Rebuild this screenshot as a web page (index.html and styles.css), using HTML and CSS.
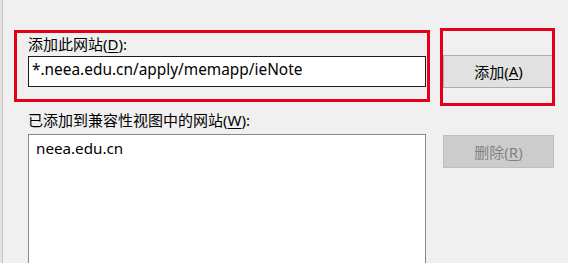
FILE: index.html
```html
<!DOCTYPE html>
<html lang="zh-CN">
<head>
<meta charset="utf-8">
<title>兼容性视图设置</title>
<link rel="stylesheet" href="styles.css">
</head>
<body>
<div class="edge"></div>
<div class="dialog">
  <div class="label label-add">添加此网站(<u>D</u>):</div>
  <div class="row row-add">
    <div class="field">*.neea.edu.cn/apply/memapp/ieNote</div>
    <div class="btn">添加(<u>A</u>)</div>
  </div>
  <div class="label label-list">已添加到兼容性视图中的网站(<u>W</u>):</div>
  <div class="row row-list">
    <div class="list"><div class="item">neea.edu.cn</div></div>
    <div class="btn btn-disabled">删除(<u>R</u>)</div>
  </div>
  <div class="mark mark-input"></div>
  <div class="mark mark-button"></div>
</div>
</body>
</html>
```
FILE: styles.css
```css
html, body {
  margin: 0;
  padding: 0;
  background: #f0f0f0;
  width: 568px;
  height: 263px;
  overflow: hidden;
}
body {
  position: relative;
  font-family: "Noto Sans", "Noto Sans CJK SC", sans-serif;
  font-size: 15px;
  color: #000;
}
.edge {
  position: absolute;
  left: 0;
  top: 0;
  width: 2px;
  height: 263px;
  background: #e2e2e2;
  border-right: 1px solid #c8c8c8;
}
.dialog {
  display: flex;
  flex-direction: column;
  padding-left: 28px;
}
.label {
  height: 21px;
  line-height: 21px;
  white-space: nowrap;
  font-size: 15px;
}
.label-add {
  margin-top: 34px;
}
.label-list {
  margin-top: 22px;
  height: 24px;
}
u {
  text-decoration-thickness: 1px;
  text-underline-offset: 2px;
}
.row {
  display: flex;
  gap: 17px;
  align-items: flex-start;
}
.field {
  box-sizing: border-box;
  width: 398px;
  height: 31px;
  margin-top: 1px;
  border: 1px solid #1c1c1c;
  background: #fff;
  padding-left: 3px;
  font-size: 15.4px;
  line-height: 25px;
  white-space: nowrap;
}
.btn {
  box-sizing: border-box;
  width: 111px;
  height: 33px;
  padding-bottom: 1px;
  background: #e1e1e1;
  border: 1px solid #adadad;
  display: flex;
  align-items: center;
  justify-content: center;
  font-size: 15px;
}
.btn-disabled {
  margin-top: 1px;
  padding-bottom: 0;
  background: #cccccc;
  border-color: #bfbfbf;
  color: #838383;
}
.list {
  box-sizing: border-box;
  width: 398px;
  height: 129px;
  border: 1px solid #828790;
  border-bottom: 0;
  background: #fff;
  padding: 2px 0 0 7px;
  font-size: 15.2px;
}
.item {
  line-height: 22px;
}
.mark {
  position: absolute;
  box-sizing: border-box;
  border: 3px solid #e50019;
}
.mark-input {
  left: 14px;
  top: 30px;
  width: 416px;
  height: 72px;
}
.mark-button {
  left: 440px;
  top: 28px;
  width: 115px;
  height: 78px;
}
```
